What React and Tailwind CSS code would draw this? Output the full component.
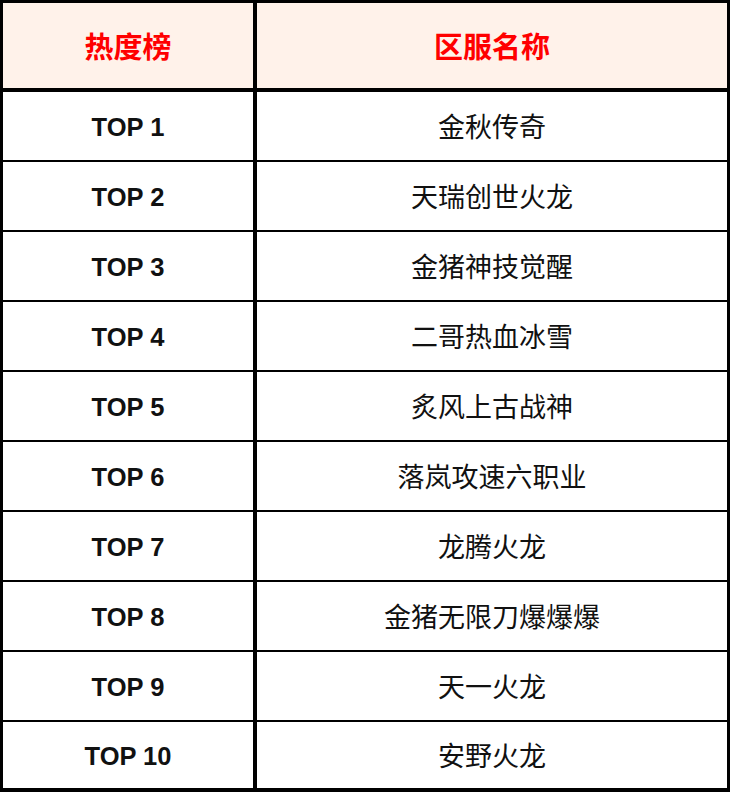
import React from "react";

const rows = [
  ["TOP 1", "金秋传奇"],
  ["TOP 2", "天瑞创世火龙"],
  ["TOP 3", "金猪神技觉醒"],
  ["TOP 4", "二哥热血冰雪"],
  ["TOP 5", "炙风上古战神"],
  ["TOP 6", "落岚攻速六职业"],
  ["TOP 7", "龙腾火龙"],
  ["TOP 8", "金猪无限刀爆爆爆"],
  ["TOP 9", "天一火龙"],
  ["TOP 10", "安野火龙"],
];

export default function App() {
  return (
    <div className="w-[730px] h-[792px] bg-white">
      <div className="w-[730px] h-[792px] border-t-[3px] border-x-[3px] border-b-[4px] border-black flex flex-col">
        <div className="flex h-[89px] border-b-[4px] border-black bg-[#fff2ea]">
          <div className="w-[250px] border-r-[4px] border-black box-content flex items-center justify-center text-[#ff0000] font-bold text-[29px] font-['Noto_Sans_CJK_SC',sans-serif] pt-[1px]">
            热度榜
          </div>
          <div className="flex-1 flex items-center justify-center text-[#ff0000] font-bold text-[29px] font-['Noto_Sans_CJK_SC',sans-serif] pt-[1px]">
            区服名称
          </div>
        </div>
        {rows.map(([a, b], i) => (
          <div
            key={a}
            className={
              i < rows.length - 1
                ? "flex h-[70px] border-b-[2px] border-black"
                : "flex h-[66px]"
            }
          >
            <div className="w-[250px] border-r-[4px] border-black box-content flex items-center justify-center pt-[2px] text-[25.5px] font-bold text-[#111] font-['Liberation_Sans',Arial,sans-serif]">
              {a}
            </div>
            <div className="flex-1 flex items-center justify-center text-[27px] text-[#111] font-['Noto_Sans_CJK_SC',sans-serif]">
              {b}
            </div>
          </div>
        ))}
      </div>
    </div>
  );
}
